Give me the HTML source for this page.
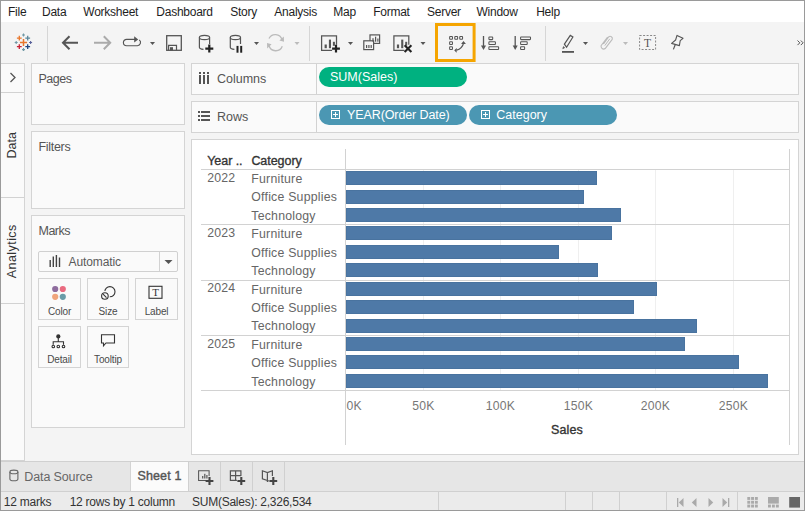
<!DOCTYPE html><html><head><meta charset="utf-8"><style>
*{margin:0;padding:0;box-sizing:border-box}
html,body{width:805px;height:511px;overflow:hidden;background:#f4f4f4;font-family:"Liberation Sans",sans-serif;color:#333}
.a{position:absolute}
.t{position:absolute;white-space:nowrap;line-height:1}
#frame{left:0;top:0;width:805px;height:511px;border:1px solid #9a9a9a;border-bottom:none}
.sep{position:absolute;width:1px;background:#d6d6d6}
.panel{position:absolute;background:#fafafa;border:1px solid #d4d4d4}
svg{position:absolute;overflow:visible}
.bar{position:absolute;background:#4e79a7;box-shadow:inset 0 0 0 1px rgba(40,70,110,0.12)}
.hline{position:absolute;height:1px;background:#d2d2d2}
.vline{position:absolute;width:1px;background:#d2d2d2}
.grid{position:absolute;width:1px;background:#efefef}
</style></head><body>
<div class="a" style="left:1px;top:1px;width:803px;height:21px;background:#fff"></div>
<div class="t" style="left:8.00px;top:6.00px;font-size:12px;color:#1e1e1e;letter-spacing:-0.25px">File</div>
<div class="t" style="left:42.00px;top:6.00px;font-size:12px;color:#1e1e1e;letter-spacing:-0.25px">Data</div>
<div class="t" style="left:83.30px;top:6.00px;font-size:12px;color:#1e1e1e;letter-spacing:-0.25px">Worksheet</div>
<div class="t" style="left:156.30px;top:6.00px;font-size:12px;color:#1e1e1e;letter-spacing:-0.25px">Dashboard</div>
<div class="t" style="left:230.20px;top:6.00px;font-size:12px;color:#1e1e1e;letter-spacing:-0.25px">Story</div>
<div class="t" style="left:274.30px;top:6.00px;font-size:12px;color:#1e1e1e;letter-spacing:-0.25px">Analysis</div>
<div class="t" style="left:333.30px;top:6.00px;font-size:12px;color:#1e1e1e;letter-spacing:-0.25px">Map</div>
<div class="t" style="left:373.20px;top:6.00px;font-size:12px;color:#1e1e1e;letter-spacing:-0.25px">Format</div>
<div class="t" style="left:427.00px;top:6.00px;font-size:12px;color:#1e1e1e;letter-spacing:-0.25px">Server</div>
<div class="t" style="left:476.50px;top:6.00px;font-size:12px;color:#1e1e1e;letter-spacing:-0.25px">Window</div>
<div class="t" style="left:536.20px;top:6.00px;font-size:12px;color:#1e1e1e;letter-spacing:-0.25px">Help</div>
<div class="sep" style="left:47px;top:26px;height:35px"></div>
<div class="sep" style="left:309px;top:26px;height:35px"></div>
<div class="sep" style="left:545px;top:26px;height:35px"></div>
<svg style="left:0;top:0" width="805" height="70" viewBox="0 0 805 70"><path d="M19.9 42.5 H27.1 M23.5 38.9 V46.1" stroke="#e8762b" stroke-width="1.5"/><path d="M16.900000000000002 38.2 H21.7 M19.3 35.800000000000004 V40.6" stroke="#e8762b" stroke-width="1.3"/><path d="M25.3 38.2 H30.099999999999998 M27.7 35.800000000000004 V40.6" stroke="#5b879b" stroke-width="1.3"/><path d="M16.900000000000002 46.6 H21.7 M19.3 44.2 V49.0" stroke="#c72035" stroke-width="1.3"/><path d="M25.3 46.6 H30.099999999999998 M27.7 44.2 V49.0" stroke="#1f457e" stroke-width="1.3"/><path d="M22.0 35.0 H25.0 M23.5 33.5 V36.5" stroke="#7099a6" stroke-width="1.1"/><path d="M14.7 42.5 H17.7 M16.2 41.0 V44.0" stroke="#7099a6" stroke-width="1.1"/><path d="M29.1 42.5 H32.1 M30.6 41.0 V44.0" stroke="#59629b" stroke-width="1.1"/><path d="M22.0 49.6 H25.0 M23.5 48.1 V51.1" stroke="#7099a6" stroke-width="1.1"/><path d="M63 42.8 H78 M69.5 36.3 L63 42.8 L69.5 49.3" fill="none" stroke="#555" stroke-width="2"/><path d="M94 42.8 H110 M103.8 36.3 L110.2 42.8 L103.8 49.3" fill="none" stroke="#aaa" stroke-width="2"/><path d="M135 39.3 H126.6 A3.2 3.2 0 0 0 126.6 45.7 H137.4 A3.2 3.2 0 0 0 139.2 39.9" fill="none" stroke="#555" stroke-width="1.15"/><path d="M134.2 36.3 L138.2 39.4 L134.2 42.6 Z" fill="#555"/><path d="M150 41.9 H155 L152.5 44.9 Z" fill="#555"/><rect x="166.7" y="35.7" width="14.6" height="14.6" fill="none" stroke="#555" stroke-width="1.3"/><path d="M168.6 50.3 V45.3 H176.5 V50.3" fill="none" stroke="#555" stroke-width="1.2"/><rect x="170" y="47.2" width="3" height="3.3" fill="#555"/><ellipse cx="204.5" cy="37.5" rx="5.099999999999994" ry="2.1" fill="none" stroke="#555" stroke-width="1.2"/><path d="M199.4 37.5 V47.199999999999996 A5.099999999999994 2.1 0 0 0 203.5 49.3" fill="none" stroke="#555" stroke-width="1.2"/><path d="M209.6 37.5 V44" fill="none" stroke="#555" stroke-width="1.2"/><path d="M205.3 48.6 H213.3 M209.3 44.6 V52.6" stroke="#222" stroke-width="2.2"/><ellipse cx="235.4" cy="37.5" rx="5.099999999999994" ry="2.1" fill="none" stroke="#555" stroke-width="1.2"/><path d="M230.3 37.5 V47.199999999999996 A5.099999999999994 2.1 0 0 0 234.4 49.3" fill="none" stroke="#555" stroke-width="1.2"/><path d="M240.5 37.5 V44" fill="none" stroke="#555" stroke-width="1.2"/><rect x="236.5" y="45.9" width="2" height="6.8" fill="#222"/><rect x="240.2" y="45.9" width="2" height="6.8" fill="#222"/><path d="M254 41.9 H259 L256.5 44.9 Z" fill="#555"/><path d="M269 38.5 A7 7 0 0 1 282 39.5 M282.3 46.3 A7 7 0 0 1 269 45.5" fill="none" stroke="#bbb" stroke-width="1.3"/><path d="M283.8 36.4 L284 41.8 L279.4 40.6 Z M267.2 48.4 L267 43 L271.6 44.2 Z" fill="#bbb"/><path d="M294.5 41.9 H299.5 L297.0 44.9 Z" fill="#bbb"/><path d="M332.1 50.4 H321.6 V35.8 H336.5 V44.8" fill="none" stroke="#555" stroke-width="1.25"/><rect x="324.6" y="44.5" width="2.2" height="3.7" fill="#555"/><rect x="328.90000000000003" y="39.599999999999994" width="2.1" height="8.6" fill="#555"/><rect x="332.90000000000003" y="41.8" width="2" height="4" fill="#555"/><path d="M332.1 48.6 H339.9 M336 44.7 V52.6" stroke="#222" stroke-width="2.2"/><path d="M348 41.9 H353 L350.5 44.9 Z" fill="#555"/><rect x="370" y="34.9" width="9.6" height="8.5" fill="none" stroke="#555" stroke-width="1.2"/><rect x="363.8" y="40.8" width="9.8" height="8.8" fill="#f4f4f4" stroke="#555" stroke-width="1.2"/><rect x="372.4" y="38.2" width="1.2" height="3.5" fill="#555"/><rect x="375" y="36.7" width="1.2" height="5" fill="#555"/><rect x="377.3" y="38.5" width="1.2" height="3.2" fill="#555"/><rect x="366" y="45" width="1.2" height="3" fill="#555"/><rect x="368.3" y="45" width="1.2" height="3" fill="#555"/><rect x="370.6" y="45" width="1.2" height="3" fill="#555"/><path d="M404.4 50.4 H393.9 V35.8 H408.79999999999995 V44.8" fill="none" stroke="#555" stroke-width="1.25"/><rect x="396.9" y="44.5" width="2.2" height="3.7" fill="#555"/><rect x="401.2" y="39.599999999999994" width="2.1" height="8.6" fill="#555"/><rect x="405.2" y="41.8" width="2" height="4" fill="#555"/><path d="M404.6 45.2 L411.4 52 M411.4 45.2 L404.6 52" stroke="#222" stroke-width="2.1"/><path d="M420.5 41.9 H425.5 L423.0 44.9 Z" fill="#555"/><rect x="436.5" y="24.5" width="37.6" height="36" fill="none" stroke="#f5a500" stroke-width="3"/><rect x="449.65" y="36.5" width="2.8" height="2.8" rx="0.5" fill="none" stroke="#555" stroke-width="1.05"/><rect x="454.79999999999995" y="36.5" width="2.8" height="2.8" rx="0.5" fill="none" stroke="#555" stroke-width="1.05"/><rect x="459.75" y="36.5" width="2.8" height="2.8" rx="0.5" fill="none" stroke="#555" stroke-width="1.05"/><rect x="449.65" y="41.65" width="2.8" height="2.8" rx="0.5" fill="none" stroke="#555" stroke-width="1.05"/><rect x="449.65" y="46.65" width="2.8" height="2.8" rx="0.5" fill="none" stroke="#555" stroke-width="1.05"/><path d="M456.6 50.2 Q462.2 48.6 463.5 43.4" fill="none" stroke="#555" stroke-width="1.2"/><path d="M463.5 40.9 L461.1 43.9 L465.9 43.9 Z M454.2 50.3 L456.8 47.9 L456.6 52.7 Z" fill="#555"/><path d="M483.5 36 V47" stroke="#555" stroke-width="1.3"/><path d="M481 45.5 H486 L483.5 50 Z" fill="#555"/><rect x="488.9" y="36.9" width="3.8" height="2.7" rx="0.5" fill="none" stroke="#555" stroke-width="1.05"/><rect x="488.9" y="41.8" width="6.5" height="2.7" rx="0.5" fill="none" stroke="#555" stroke-width="1.05"/><rect x="488.9" y="46.8" width="9.7" height="2.7" rx="0.5" fill="none" stroke="#555" stroke-width="1.05"/><path d="M515.2 36 V47" stroke="#555" stroke-width="1.3"/><path d="M512.7 45.5 H517.7 L515.2 50 Z" fill="#555"/><rect x="520.6" y="36.9" width="9.9" height="2.7" rx="0.5" fill="none" stroke="#555" stroke-width="1.05"/><rect x="520.6" y="41.8" width="6.6" height="2.7" rx="0.5" fill="none" stroke="#555" stroke-width="1.05"/><rect x="520.6" y="46.8" width="4" height="2.7" rx="0.5" fill="none" stroke="#555" stroke-width="1.05"/><path d="M564.4 44.2 L570.3 35.4 L572.9 37 L566.6 47.2 Z" fill="none" stroke="#555" stroke-width="1.2"/><path d="M563.6 46.4 L562.8 48.6 L564.8 47.6" fill="#555" stroke="#555" stroke-width="0.8"/><rect x="562" y="51" width="12" height="1.8" fill="#555"/><path d="M583 41.9 H588 L585.5 44.9 Z" fill="#555"/><path d="M603.5 44 L608.6 37 A2.2 2.2 0 0 1 612.2 39.4 L605.2 48.5 A2.6 2.6 0 0 1 601.2 45.5 L607.6 37.2" fill="none" stroke="#bbb" stroke-width="1.1"/><path d="M604.8 45.6 L609.8 38.8" fill="none" stroke="#bbb" stroke-width="1"/><path d="M623 41.9 H628 L625.5 44.9 Z" fill="#bbb"/><rect x="639.6" y="35.5" width="16" height="14" fill="none" stroke="#888" stroke-width="1" stroke-dasharray="2 1.5"/><text x="647.5" y="47" font-family="Liberation Serif" font-size="11.5" text-anchor="middle" fill="#555">T</text><path d="M677 35.4 L683 38.3 L680.2 40.6 L679.4 45.6 L671.6 43.4 L675.6 40 Z" fill="none" stroke="#555" stroke-width="1.1" stroke-linejoin="round"/><path d="M675.3 44.5 L673.4 49.4" stroke="#555" stroke-width="1.2"/><path d="M797.5 40.5 L799.8 42.8 L797.5 45.1 M800.8 40.5 L803.1 42.8 L800.8 45.1" fill="none" stroke="#555" stroke-width="1"/></svg>
<div class="panel" style="left:0px;top:63px;width:25px;height:398px;border-left:none"></div>
<div class="hline" style="left:1px;top:92px;width:23px"></div>
<div class="hline" style="left:1px;top:197px;width:23px"></div>
<div class="hline" style="left:1px;top:303px;width:23px"></div>
<svg style="left:0;top:0" width="30" height="100"><path d="M10.5 73 L15 77.5 L10.5 82" fill="none" stroke="#555" stroke-width="1.3"/></svg>
<div class="t" style="left:-8px;top:139px;width:40px;text-align:center;font-size:12.5px;color:#333;transform:rotate(-90deg)">Data</div>
<div class="t" style="left:-28px;top:245px;width:80px;text-align:center;font-size:12.5px;letter-spacing:0.45px;color:#333;transform:rotate(-90deg)">Analytics</div>
<div class="panel" style="left:31px;top:63px;width:154px;height:62px"></div>
<div class="panel" style="left:31px;top:131px;width:154px;height:78px"></div>
<div class="panel" style="left:31px;top:215px;width:154px;height:213px"></div>
<div class="t" style="left:38.50px;top:73.00px;font-size:12.5px;color:#555;letter-spacing:-0.5px">Pages</div>
<div class="t" style="left:38.50px;top:141.00px;font-size:12.5px;color:#555;letter-spacing:-0.3px">Filters</div>
<div class="t" style="left:38.50px;top:225.00px;font-size:12.5px;color:#555;letter-spacing:-0.5px">Marks</div>
<div class="a" style="left:38px;top:251px;width:140px;height:21px;border:1px solid #d0d0d0;border-radius:2px;background:#fafafa"></div>
<div class="vline" style="left:159px;top:252px;height:19px"></div>
<svg style="left:0;top:0" width="200" height="400"><g fill="#444"><rect x="49.5" y="260" width="1.4" height="7"/><rect x="52.6" y="256.5" width="1.4" height="10.5"/><rect x="55.7" y="255" width="1.4" height="12"/><rect x="58.8" y="257.5" width="1.4" height="9.5"/></g><path d="M164.5 260 L172.5 260 L168.5 264 Z" fill="#555"/></svg>
<div class="t" style="left:68.50px;top:256.00px;font-size:12px;color:#5a5a5a;letter-spacing:-0.1px">Automatic</div>
<div class="a" style="left:38px;top:278px;width:43px;height:42px;border:1px solid #d4d4d4;background:#fafafa"></div>
<div class="t" style="left:38.00px;top:307.00px;font-size:10px;color:#4a4a4a;letter-spacing:-0.15px;text-align:center;width:43px">Color</div>
<div class="a" style="left:87px;top:278px;width:42px;height:42px;border:1px solid #d4d4d4;background:#fafafa"></div>
<div class="t" style="left:87.00px;top:307.00px;font-size:10px;color:#4a4a4a;letter-spacing:-0.15px;text-align:center;width:42px">Size</div>
<div class="a" style="left:135px;top:278px;width:43px;height:42px;border:1px solid #d4d4d4;background:#fafafa"></div>
<div class="t" style="left:135.00px;top:307.00px;font-size:10px;color:#4a4a4a;letter-spacing:-0.15px;text-align:center;width:43px">Label</div>
<div class="a" style="left:38px;top:326px;width:43px;height:42px;border:1px solid #d4d4d4;background:#fafafa"></div>
<div class="t" style="left:38.00px;top:355.00px;font-size:10px;color:#4a4a4a;letter-spacing:-0.15px;text-align:center;width:43px">Detail</div>
<div class="a" style="left:87px;top:326px;width:42px;height:42px;border:1px solid #d4d4d4;background:#fafafa"></div>
<div class="t" style="left:87.00px;top:355.00px;font-size:10px;color:#4a4a4a;letter-spacing:-0.15px;text-align:center;width:42px">Tooltip</div>
<svg style="left:0;top:0" width="200" height="400"><circle cx="55.2" cy="289" r="3.1" fill="#8e6c9e"/><circle cx="62.8" cy="289" r="3.1" fill="#ea6b80"/><circle cx="55.2" cy="296.8" r="3.1" fill="#f0a57c"/><circle cx="62.8" cy="296.8" r="3.1" fill="#6a9ca8"/><g fill="none" stroke="#333" stroke-width="1.1"><circle cx="109.9" cy="291.7" r="5.1"/><circle cx="104.9" cy="296" r="3.5" fill="#fafafa" stroke="#fafafa" stroke-width="3"/><circle cx="104.9" cy="296" r="3.3"/><path d="M103.1 294.2 L106.5 297.6"/><rect x="149" y="286.3" width="13" height="12"/><path d="M101.5 334.8 H114.5 V343 H106 L103.5 345.8 V343 H101.5 Z"/><path d="M58.3 336.5 V341.7 M53.2 344.8 V341.7 H63.5 V344.8"/><circle cx="53.3" cy="346.5" r="1.3"/><circle cx="58.3" cy="346.5" r="1.3"/><circle cx="63.5" cy="346.5" r="1.3"/></g><circle cx="58.3" cy="336.4" r="2.1" fill="#333"/><text x="155.5" y="296.3" font-family="Liberation Serif" font-size="11" text-anchor="middle" fill="#333">T</text></svg>
<div class="panel" style="left:191px;top:63px;width:608px;height:32px"></div>
<div class="panel" style="left:191px;top:101px;width:608px;height:32px"></div>
<div class="vline" style="left:316px;top:64px;height:30px"></div>
<div class="vline" style="left:316px;top:102px;height:30px"></div>
<svg style="left:0;top:0" width="805" height="140"><g fill="#555"><rect x="199" y="72" width="2" height="2"/><rect x="199" y="75" width="2" height="9"/><rect x="203" y="72" width="2" height="2"/><rect x="203" y="75" width="2" height="9"/><rect x="207" y="72" width="2" height="2"/><rect x="207" y="75" width="2" height="9"/><rect x="198" y="111" width="2" height="2"/><rect x="201" y="111" width="9" height="2"/><rect x="198" y="115" width="2" height="2"/><rect x="201" y="115" width="9" height="2"/><rect x="198" y="119" width="2" height="2"/><rect x="201" y="119" width="9" height="2"/></g></svg>
<div class="t" style="left:217.00px;top:73.00px;font-size:12.5px;color:#555">Columns</div>
<div class="t" style="left:217.00px;top:111.00px;font-size:12.5px;color:#555">Rows</div>
<div class="a" style="left:319px;top:67px;width:148px;height:20px;border-radius:10px;background:#00b180"></div>
<div class="t" style="left:330.00px;top:71.00px;font-size:12.5px;color:#fff">SUM(Sales)</div>
<div class="a" style="left:319px;top:105px;width:148px;height:20px;border-radius:10px;background:#4b97b3"></div>
<div class="a" style="left:469px;top:105px;width:148px;height:20px;border-radius:10px;background:#4b97b3"></div>
<div class="a" style="left:331px;top:110px;width:9px;height:9px;border:1px solid #fff"></div>
<div class="a" style="left:333px;top:114px;width:5px;height:1px;background:#fff"></div>
<div class="a" style="left:335px;top:112px;width:1px;height:5px;background:#fff"></div>
<div class="a" style="left:481px;top:110px;width:9px;height:9px;border:1px solid #fff"></div>
<div class="a" style="left:483px;top:114px;width:5px;height:1px;background:#fff"></div>
<div class="a" style="left:485px;top:112px;width:1px;height:5px;background:#fff"></div>
<div class="t" style="left:347.00px;top:109.00px;font-size:12.5px;color:#fff;letter-spacing:-0.1px">YEAR(Order Date)</div>
<div class="t" style="left:496.30px;top:109.00px;font-size:12.5px;color:#fff">Category</div>
<div class="panel" style="left:191px;top:139px;width:608px;height:316px;background:#fff"></div>
<div class="grid" style="left:423px;top:170px;height:220px"></div>
<div class="grid" style="left:500px;top:170px;height:220px"></div>
<div class="grid" style="left:578px;top:170px;height:220px"></div>
<div class="grid" style="left:655px;top:170px;height:220px"></div>
<div class="grid" style="left:733px;top:170px;height:220px"></div>
<div class="vline" style="left:345px;top:149px;height:296px"></div>
<div class="vline" style="left:789px;top:149px;height:296px"></div>
<div class="hline" style="left:201px;top:169px;width:589px"></div>
<div class="hline" style="left:201px;top:224px;width:589px"></div>
<div class="hline" style="left:201px;top:280px;width:589px"></div>
<div class="hline" style="left:201px;top:335px;width:589px"></div>
<div class="hline" style="left:201px;top:390px;width:589px"></div>
<div class="bar" style="left:346px;top:171px;width:251px;height:14px"></div>
<div class="t" style="left:251.30px;top:173.00px;font-size:12.3px;color:#666;letter-spacing:0.22px">Furniture</div>
<div class="t" style="left:207.20px;top:172.00px;font-size:12.3px;color:#666;letter-spacing:0.22px">2022</div>
<div class="bar" style="left:346px;top:190px;width:238px;height:14px"></div>
<div class="t" style="left:251.30px;top:191.00px;font-size:12.3px;color:#666;letter-spacing:0.22px">Office Supplies</div>
<div class="bar" style="left:346px;top:208px;width:275px;height:14px"></div>
<div class="t" style="left:251.30px;top:210.00px;font-size:12.3px;color:#666;letter-spacing:0.22px">Technology</div>
<div class="bar" style="left:346px;top:226px;width:266px;height:14px"></div>
<div class="t" style="left:251.30px;top:228.00px;font-size:12.3px;color:#666;letter-spacing:0.22px">Furniture</div>
<div class="t" style="left:207.20px;top:227.00px;font-size:12.3px;color:#666;letter-spacing:0.22px">2023</div>
<div class="bar" style="left:346px;top:245px;width:213px;height:14px"></div>
<div class="t" style="left:251.30px;top:247.00px;font-size:12.3px;color:#666;letter-spacing:0.22px">Office Supplies</div>
<div class="bar" style="left:346px;top:263px;width:252px;height:14px"></div>
<div class="t" style="left:251.30px;top:265.00px;font-size:12.3px;color:#666;letter-spacing:0.22px">Technology</div>
<div class="bar" style="left:346px;top:282px;width:311px;height:14px"></div>
<div class="t" style="left:251.30px;top:284.00px;font-size:12.3px;color:#666;letter-spacing:0.22px">Furniture</div>
<div class="t" style="left:207.20px;top:282.00px;font-size:12.3px;color:#666;letter-spacing:0.22px">2024</div>
<div class="bar" style="left:346px;top:300px;width:288px;height:14px"></div>
<div class="t" style="left:251.30px;top:302.00px;font-size:12.3px;color:#666;letter-spacing:0.22px">Office Supplies</div>
<div class="bar" style="left:346px;top:319px;width:351px;height:14px"></div>
<div class="t" style="left:251.30px;top:320.00px;font-size:12.3px;color:#666;letter-spacing:0.22px">Technology</div>
<div class="bar" style="left:346px;top:337px;width:339px;height:14px"></div>
<div class="t" style="left:251.30px;top:339.00px;font-size:12.3px;color:#666;letter-spacing:0.22px">Furniture</div>
<div class="t" style="left:207.20px;top:338.00px;font-size:12.3px;color:#666;letter-spacing:0.22px">2025</div>
<div class="bar" style="left:346px;top:355px;width:393px;height:14px"></div>
<div class="t" style="left:251.30px;top:357.00px;font-size:12.3px;color:#666;letter-spacing:0.22px">Office Supplies</div>
<div class="bar" style="left:346px;top:374px;width:422px;height:14px"></div>
<div class="t" style="left:251.30px;top:376.00px;font-size:12.3px;color:#666;letter-spacing:0.22px">Technology</div>
<div class="t" style="left:207.20px;top:155.00px;font-size:12.5px;color:#333;letter-spacing:-0.05px;-webkit-text-stroke:0.35px #333">Year ..</div>
<div class="t" style="left:251.40px;top:155.00px;font-size:12.5px;color:#333;letter-spacing:-0.05px;-webkit-text-stroke:0.35px #333">Category</div>
<div class="t" style="left:346.60px;top:400.00px;font-size:12.2px;color:#777;letter-spacing:0.2px">0K</div>
<div class="t" style="left:393.50px;top:400.00px;font-size:12.2px;color:#777;letter-spacing:0.2px;text-align:center;width:60px">50K</div>
<div class="t" style="left:470.50px;top:400.00px;font-size:12.2px;color:#777;letter-spacing:0.2px;text-align:center;width:60px">100K</div>
<div class="t" style="left:548.50px;top:400.00px;font-size:12.2px;color:#777;letter-spacing:0.2px;text-align:center;width:60px">150K</div>
<div class="t" style="left:625.50px;top:400.00px;font-size:12.2px;color:#777;letter-spacing:0.2px;text-align:center;width:60px">200K</div>
<div class="t" style="left:703.50px;top:400.00px;font-size:12.2px;color:#777;letter-spacing:0.2px;text-align:center;width:60px">250K</div>
<div class="t" style="left:537.00px;top:424.00px;font-size:12.5px;color:#333;letter-spacing:0.1px;text-align:center;width:60px;-webkit-text-stroke:0.35px #333">Sales</div>
<div class="a" style="left:1px;top:461px;width:803px;height:30px;background:#e6e6e6;border-top:1px solid #d0d0d0"></div>
<div class="a" style="left:130px;top:462px;width:58px;height:29px;background:#fbfbfb;border-left:1px solid #d4d4d4"></div>
<div class="vline" style="left:188px;top:462px;height:29px;background:#d0d0d0"></div>
<div class="vline" style="left:220px;top:462px;height:29px;background:#d0d0d0"></div>
<div class="vline" style="left:252px;top:462px;height:29px;background:#d0d0d0"></div>
<div class="vline" style="left:284px;top:462px;height:29px;background:#d0d0d0"></div>
<div class="t" style="left:24.30px;top:471.00px;font-size:12.5px;color:#666;letter-spacing:-0.12px">Data Source</div>
<div class="t" style="left:137.40px;top:470.00px;font-size:12.5px;color:#555;letter-spacing:0.15px;-webkit-text-stroke:0.4px #555">Sheet 1</div>
<svg style="left:0;top:0" width="805" height="511"><ellipse cx="13.9" cy="471.9" rx="4" ry="1.8" fill="none" stroke="#666" stroke-width="1.1"/><path d="M9.9 471.9 V479 A4 1.8 0 0 0 17.9 479 V471.9" fill="none" stroke="#666" stroke-width="1.1"/><path d="M206.1 480.4 H198.6 V470.8 H209.1 V476" fill="none" stroke="#555" stroke-width="1.05"/><rect x="202.1" y="476" width="1.2" height="2.5" fill="#555"/><rect x="204.2" y="473.8" width="1.2" height="4.7" fill="#555"/><rect x="206.29999999999998" y="475" width="1.2" height="3.5" fill="#555"/><path d="M205.6 481 H213.4 M209.5 477.1 V485" stroke="#444" stroke-width="2.1"/><path d="M236.9 480.4 H230.4 V470.8 H240.9 V476 M230.4 475.6 H240.9 M235.6 470.8 V480.4" fill="none" stroke="#555" stroke-width="1.2"/><path d="M237.4 481 H245.20000000000002 M241.3 477.1 V485" stroke="#444" stroke-width="2.1"/><path d="M268.9 481 L262.4 478.8 V470.8 L267.4 472.6 L272.4 470.8 V476 M267.4 472.6 V482" fill="none" stroke="#555" stroke-width="1.2"/><path d="M269.4 481 H277.2 M273.29999999999995 477.1 V485" stroke="#444" stroke-width="2.1"/></svg>
<div class="a" style="left:1px;top:491px;width:803px;height:20px;background:#ebebeb;border-top:1px solid #d0d0d0;border-bottom:1px solid #9a9a9a"></div>
<div class="vline" style="left:438px;top:492px;height:18px;background:#d0d0d0"></div>
<div class="vline" style="left:565px;top:492px;height:18px;background:#d0d0d0"></div>
<div class="vline" style="left:592px;top:492px;height:18px;background:#d0d0d0"></div>
<div class="vline" style="left:619px;top:492px;height:18px;background:#d0d0d0"></div>
<div class="vline" style="left:666px;top:492px;height:18px;background:#d0d0d0"></div>
<div class="vline" style="left:737px;top:492px;height:18px;background:#d0d0d0"></div>
<div class="t" style="left:3.80px;top:496.00px;font-size:12px;color:#333;letter-spacing:-0.25px">12 marks</div>
<div class="t" style="left:69.70px;top:496.00px;font-size:12px;color:#333;letter-spacing:-0.25px">12 rows by 1 column</div>
<div class="t" style="left:192.00px;top:496.00px;font-size:12px;color:#333;letter-spacing:-0.25px">SUM(Sales): 2,326,534</div>
<svg style="left:0;top:0" width="805" height="511"><rect x="677" y="498" width="1.3" height="9" fill="#aaa"/><path d="M683.5 498 V507 L678.8 502.5 Z" fill="#aaa"/><path d="M696.5 498 V507 L691.8 502.5 Z" fill="#aaa"/><path d="M708.5 498 V507 L713.2 502.5 Z" fill="#aaa"/><path d="M722.5 498 V507 L727.2 502.5 Z" fill="#aaa"/><rect x="728" y="498" width="1.3" height="9" fill="#aaa"/><rect x="747.3" y="497.0" width="2.9" height="2.9" fill="#aaa"/><rect x="751.0999999999999" y="497.0" width="2.9" height="2.9" fill="#aaa"/><rect x="754.9" y="497.0" width="2.9" height="2.9" fill="#aaa"/><rect x="747.3" y="500.8" width="2.9" height="2.9" fill="#aaa"/><rect x="751.0999999999999" y="500.8" width="2.9" height="2.9" fill="#aaa"/><rect x="754.9" y="500.8" width="2.9" height="2.9" fill="#aaa"/><rect x="747.3" y="504.6" width="2.9" height="2.9" fill="#aaa"/><rect x="751.0999999999999" y="504.6" width="2.9" height="2.9" fill="#aaa"/><rect x="754.9" y="504.6" width="2.9" height="2.9" fill="#aaa"/><rect x="768" y="497" width="10.8" height="6.6" fill="#aaa"/><rect x="768.0" y="504.6" width="2.9" height="2.9" fill="#aaa"/><rect x="771.95" y="504.6" width="2.9" height="2.9" fill="#aaa"/><rect x="775.9" y="504.6" width="2.9" height="2.9" fill="#aaa"/><rect x="789.2" y="497" width="10.8" height="10.6" fill="#666"/></svg>
<div class="a" id="frame"></div>
</body></html>
